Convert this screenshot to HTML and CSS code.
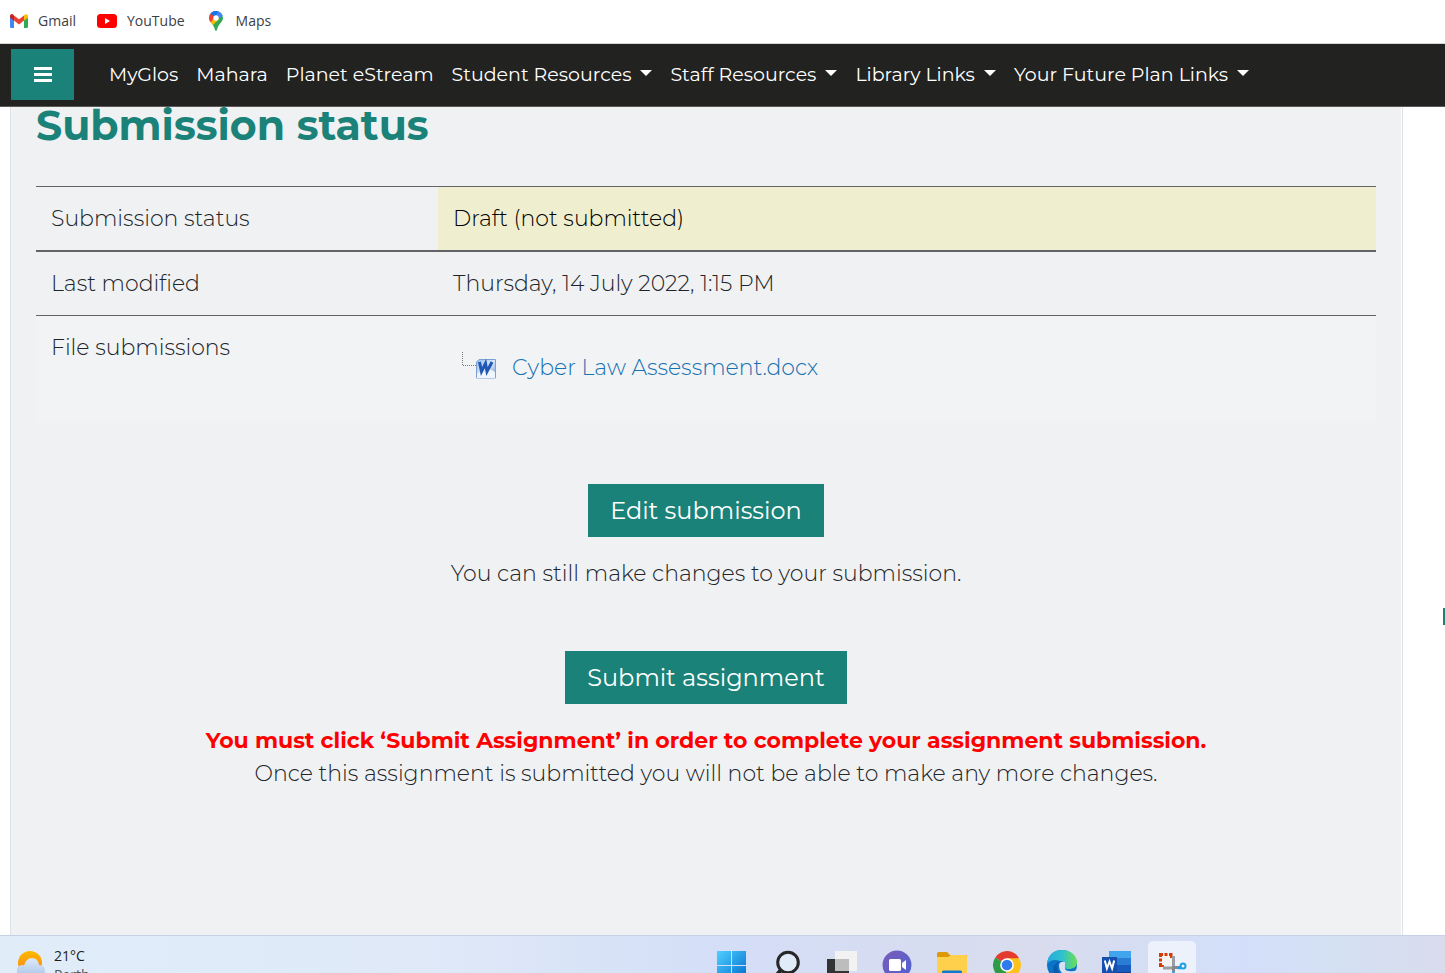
FILE: index.html
```html
<!DOCTYPE html>
<html lang="en">
<head>
<meta charset="utf-8">
<meta name="viewport" content="width=device-width, initial-scale=1">
<title>Submission status</title>
<link rel="stylesheet" href="styles.css">
</head>
<body>
<nav class="bookmarks" aria-label="Bookmarks">
  <a class="bookmark" href="#">
    <svg width="18" height="14" viewBox="0 0 18 14" aria-hidden="true"><path fill="#4285f4" d="M0 3v9.500Q0 14 1.400 14H4V5z"/><path fill="#34a853" d="M14 5v9h2.600Q18 14 18 12.500V3z"/><path fill="#ea4335" d="M4 1.500 9 5.300 14 1.500V6.600L9 10.400 4 6.600z"/><path fill="#c5221f" d="M0 2.200C0 .2 2.100-.6 3.500.9L4 1.500v5.100L0 3.700z"/><path fill="#fbbc04" d="M14 1.500C15.600-.6 18 .2 18 2.200v1.500l-4 2.900z"/></svg>
    <span>Gmail</span>
  </a>
  <a class="bookmark" href="#">
    <svg width="20" height="14" viewBox="0 0 20 14" aria-hidden="true"><rect width="20" height="14" rx="3.500" fill="#f00"/><path fill="#fff" d="M8 4v6l5-3z"/></svg>
    <span>YouTube</span>
  </a>
  <a class="bookmark" href="#">
    <svg width="20" height="20" viewBox="0 0 20 20" aria-hidden="true"><clipPath id="pin"><path d="M10 0a7 7 0 0 1 7 7c0 4-5 6-6 12q-1 2-2 0C8 13 3 11 3 7a7 7 0 0 1 7-7z"/></clipPath><g clip-path="url(#pin)"><path fill="#34a853" d="M0 0h20v20H0z"/><path fill="#4285f4" d="M4 0h14v4l-6 4-7-5z"/><path fill="#1a73e8" d="M4 0h8L9 8 4 3z"/><path fill="#fbbc04" d="M3 11 10 5l3 3-7 7z"/><path fill="#ea4335" d="M2 1l7 5-5 6H2z"/></g><circle cx="10" cy="7" r="2.700" fill="#fff"/></svg>
    <span>Maps</span>
  </a>
</nav>

<header class="navbar">
  <button class="menu-toggle" type="button" aria-label="Menu">
    <svg width="18" height="16" viewBox="0 0 18 16" aria-hidden="true"><path fill="#fff" d="M0 0h18v3H0zM0 6h18v3H0zM0 12h18v3H0z"/></svg>
  </button>
  <nav class="links" aria-label="Main">
    <a class="link" href="#">MyGlos</a>
    <a class="link" href="#">Mahara</a>
    <a class="link" href="#">Planet eStream</a>
    <button class="link dropdown" type="button">Student Resources</button>
    <button class="link dropdown" type="button">Staff Resources</button>
    <button class="link dropdown" type="button">Library Links</button>
    <button class="link dropdown" type="button">Your Future Plan Links</button>
  </nav>
</header>

<div class="page">
  <main class="content">
    <h1 class="title">Submission status</h1>
    <table class="status">
      <tr class="row"><th class="label" scope="row">Submission status</th><td class="value draft">Draft (not submitted)</td></tr>
      <tr class="row row-strong"><th class="label" scope="row">Last modified</th><td class="value">Thursday, 14 July 2022, 1:15 PM</td></tr>
      <tr class="row row-files"><th class="label" scope="row">File submissions</th><td class="value">
        <div class="file">
          <svg class="file-icon" width="36" height="28" viewBox="0 0 36 28" aria-hidden="true"><defs><linearGradient id="doc" x1="0" y1="0" x2="1" y2="1"><stop offset="0" stop-color="#8ebbe8"/><stop offset=".5" stop-color="#d8e8f8"/><stop offset="1" stop-color="#7795cf"/></linearGradient></defs><path d="M1.500 1v13.500H15" fill="none" stroke="#777" stroke-dasharray="1 1"/><path d="M18 8.500h16.500v18.500H15.500V11z" fill="url(#doc)" stroke="#7d9fd3"/><path d="M16 23q4-4 8-2 4-5 10 0v6H16z" fill="#eef5fd"/><path d="m18.500 11 2 9.500 4-8 1.500 8 5-9.500" fill="none" stroke="#2057b5" stroke-width="3"/></svg>
          <a class="file-link" href="#">Cyber Law Assessment.docx</a>
        </div>
      </td></tr>
    </table>
    <div class="actions">
      <section class="action">
        <button class="primary" type="button">Edit submission</button>
        <p class="note">You can still make changes to your submission.</p>
      </section>
      <section class="action">
        <button class="primary" type="button">Submit assignment</button>
        <p class="note"><strong class="warning">You must click ‘Submit Assignment’ in order to complete your assignment submission.</strong><br>Once this assignment is submitted you will not be able to make any more changes.</p>
      </section>
    </div>
  </main>
  <aside class="side"><div class="side-mark"></div></aside>
</div>

<footer class="taskbar">
  <div class="weather">
    <svg width="28" height="28" viewBox="0 0 28 28" aria-hidden="true"><defs><linearGradient id="sun" x2="0" y2="1"><stop stop-color="#ffb900"/><stop offset="1" stop-color="#f5811f"/></linearGradient><linearGradient id="cloud" x2="0" y2="1"><stop stop-color="#dfeafa"/><stop offset="1" stop-color="#a9c5ea"/></linearGradient></defs><circle cx="13" cy="12" r="12" fill="url(#sun)"/><path d="M6 26a6 6 0 0 1-1-12q2 0 2 .5Q9 7 15 7q6 0 7 7 6 0 6 6t-6 6z" fill="url(#cloud)"/></svg>
    <div class="weather-text"><div>21°C</div><div class="city">Perth</div></div>
  </div>
  <div class="apps">
    <button class="app" type="button" aria-label="Start"><svg width="30" height="30" viewBox="0 0 30 30"><defs><linearGradient id="win" x2="1" y2="1"><stop stop-color="#4fd0ff"/><stop offset="1" stop-color="#006ccf"/></linearGradient></defs><path fill="url(#win)" d="M0 1h14v14H0zM15 1h14v14H15zM0 16h14v14H0zM15 16h14v14H15z"/></svg></button>
    <button class="app" type="button" aria-label="Search"><svg width="30" height="30" viewBox="0 0 30 30"><path d="m9 20-6 7" stroke="#222" stroke-width="4"/><circle cx="16" cy="12.500" r="10.300" fill="#e0eaf9" stroke="#262626" stroke-width="3"/></svg></button>
    <button class="app" type="button" aria-label="Task view"><svg width="30" height="30" viewBox="0 0 30 30"><path fill="#333" d="M0 9h22v20H0z"/><path fill="#f2f2f2" d="M8 1h22v20H8z"/><path fill="#bdbdbd" d="M8 9h14v12H8z"/></svg></button>
    <button class="app" type="button" aria-label="Chat"><svg width="30" height="30" viewBox="0 0 30 30"><defs><linearGradient id="chat" x2="1" y2="1"><stop stop-color="#7b5cb8"/><stop offset="1" stop-color="#4c63d2"/></linearGradient></defs><circle cx="15" cy="15" r="14.500" fill="url(#chat)"/><rect x="7" y="9" width="12" height="12" rx="1.500" fill="#fff"/><path fill="#fff" d="m20 13 4-3v10l-4-3z"/></svg></button>
    <button class="app" type="button" aria-label="File Explorer"><svg width="30" height="30" viewBox="0 0 30 30"><path fill="#dc9a08" d="M0 3.500Q0 2 1.500 2H10l3 3h17v10H0z"/><path fill="#ffd04c" d="M0 7h11l3-2h14.500Q30 5 30 6.500V29H0z"/><path fill="#0f78d0" d="M5 29v-7q0-1.500 1.500-1.500h17q1.500 0 1.500 1.500v7z"/></svg></button>
    <button class="app" type="button" aria-label="Chrome"><svg width="30" height="30" viewBox="0 0 30 30"><path fill="#e33b2e" d="M15 15 3.300 7.500A13.700 13.700 0 0 1 27 8.200z"/><path fill="#2d9b47" d="M15 15 3.300 7.500A13.700 13.700 0 0 0 14 28.700z"/><path fill="#fcc21b" d="M15 15V8.200h12A13.700 13.700 0 0 1 14 28.700z"/><circle cx="15" cy="15" r="6.800" fill="#fff"/><circle cx="15" cy="15" r="5.300" fill="#2f7bed"/></svg></button>
    <button class="app" type="button" aria-label="Edge"><svg width="30" height="30" viewBox="0 0 30 30"><defs><linearGradient id="edge"><stop stop-color="#2aa9dc"/><stop offset=".5" stop-color="#2fc0cf"/><stop offset="1" stop-color="#6be052"/></linearGradient></defs><circle cx="15" cy="15" r="15" fill="#0b74c8"/><path fill="url(#edge)" d="M0 14C1 4 7 0 15 0c9 0 15 6 15 12 0 5-4 7-8 7-4 0-5-1-4-3 1-3-1-5-5-5q-8-3-13 3z"/><path fill="#d8e1f4" d="M18 12q-6-1-6 4t5 9l13-1v-4q-4 2-8 1-5 0-4-5z"/><path fill="#0d5cab" d="M13 11q-4 3-2 9 2 5 7 8-10 0-12-8 0-6 7-9z"/></svg></button>
    <button class="app" type="button" aria-label="Word"><svg width="30" height="30" viewBox="0 0 30 30"><path fill="#41a5ee" d="M7 1h22v7H7z"/><path fill="#2b7cd3" d="M7 8h22v7H7z"/><path fill="#185abd" d="M7 15h22v7H7z"/><path fill="#103f91" d="M7 22h22v7H7z"/><path fill="#174fae" d="M0 7h15v16H0z"/><path d="m2.800 10.500 2.100 8 2.600-7 2.600 7 2.100-8" fill="none" stroke="#fff" stroke-width="2"/></svg></button>
    <button class="app active" type="button" aria-label="Snipping Tool"><svg width="30" height="30" viewBox="0 0 30 30"><path fill="#f3f1f1" d="M5 5h10v10H5z"/><path fill="#d83b01" d="M2 3h4v3H5v1H2zM7.500 3h3v3h-3zM12 3h3.500v5H13V6h-1zM2 8.500h3v3H2zM2 13h3v2h2v2H2z"/><path d="M16.500 6v12H6" fill="none" stroke="#9a9da1" stroke-width="3"/><path d="M15 17.500h8M16.500 17v5" stroke="#85888c" stroke-width="3"/><circle cx="26" cy="16" r="2.500" fill="none" stroke="#1c9fe5" stroke-width="2"/><path stroke="#1c9fe5" stroke-width="2.500" d="M20.500 18h4M16.500 21.500v7"/></svg></button>
  </div>
</footer>
</body>
</html>
```

FILE: styles.css
```css
* { box-sizing: border-box; }

body {
  margin: 0;
  height: 100vh;
  display: flex;
  flex-direction: column;
  overflow: hidden;
  background: #fff;
  color: #212529;
  font-family: Montserrat, Inter, sans-serif;
  font-size: 22px;
  line-height: 33px;
}

button { font: inherit; border: 0; margin: 0; cursor: pointer; }
a { text-decoration: none; }
svg { display: block; flex: none; }

.bookmarks {
  flex: none;
  display: flex;
  align-items: center;
  gap: 21px;
  padding: 10px 10px 11px;
  border-bottom: 1px solid #d5d5d5;
  font-family: "Segoe UI", "Open Sans", sans-serif;
  font-size: 14px;
  line-height: 22px;
}
.bookmark { display: flex; align-items: center; gap: 10px; color: #3c4043; }

.navbar {
  flex: none;
  display: flex;
  align-items: center;
  gap: 35px;
  padding: 5px 11px 6px;
  background: #222220;
  border-bottom: 1px solid #5c5959;
}
.menu-toggle {
  display: flex;
  align-items: center;
  justify-content: center;
  width: 63px;
  height: 51px;
  padding: 0;
  background: #1a8278;
}
.links { display: flex; align-items: center; gap: 18px; font-size: 19px; }
.link { padding: 0; background: none; color: #fff; white-space: nowrap; }
.dropdown { display: flex; align-items: center; gap: 9px; }
.dropdown::after {
  content: "";
  margin-bottom: 3px;
  border: 6px solid transparent;
  border-top-color: #fff;
  border-bottom: 0;
}

.page { flex: 1; min-height: 0; display: flex; padding-left: 10px; overflow: hidden; }
.content {
  flex: 1;
  padding: 0 26px 0 25px;
  background: #f0f1f3;
  border: solid #dee2e6;
  border-width: 0 1px;
  box-shadow: inset -1px 0 #fff;
}
.title { margin: 0 0 43px; color: #1a8278; font-size: 41px; font-weight: 700; line-height: 36px; }

.status { width: 100%; table-layout: fixed; border-collapse: collapse; }
.row { border-top: 1px solid #626467; }
.row-strong { border-top-width: 2px; }
.row-files { background: #f2f3f5; }
.label, .value { padding: 15px; text-align: left; vertical-align: top; font-weight: 350; }
.label { width: 30%; }
.draft { background: #efefcf; color: #000; }
.file { display: flex; align-items: flex-start; gap: 15px; margin: 20px 0 24px; padding-left: 8px; }
.file-link { color: #1771b2; }

.actions { display: grid; gap: 61px; margin-top: 61px; text-align: center; }
.primary { padding: 10px 22px; background: #1a8278; color: #fff; font-size: 24px; }
.note { margin: 20px 0 0; font-weight: 350; }
.warning { color: #f00; font-weight: 700; }

.side { flex: none; width: 42px; padding-top: 501px; }
.side-mark { width: 2px; height: 17px; margin-left: auto; background: #1a8278; }

.taskbar {
  flex: none;
  display: flex;
  height: 38px;
  overflow: hidden;
  border-top: 1px solid #c6d1e6;
  background: linear-gradient(90deg, #e0edf9, #dfe9f8 30%, #d4def7 50%, #d8dced 72%, #d3dffa 86%, #d4e0f3 92%, #d8dced);
}
.weather {
  flex: 1;
  display: flex;
  align-items: flex-start;
  gap: 9px;
  padding: 15px 0 0 17px;
  color: #1c1c1c;
  font-family: "Segoe UI", "Open Sans", sans-serif;
  font-size: 14px;
  line-height: 19px;
}
.weather-text { margin-top: -5px; }
.city { color: #555; }
.apps { display: flex; gap: 7px; padding-top: 5px; margin-right: 249px; }
.app { width: 48px; height: 48px; padding: 9px; background: none; border-radius: 5px; }
.active { background: #edf1fb; }
```
